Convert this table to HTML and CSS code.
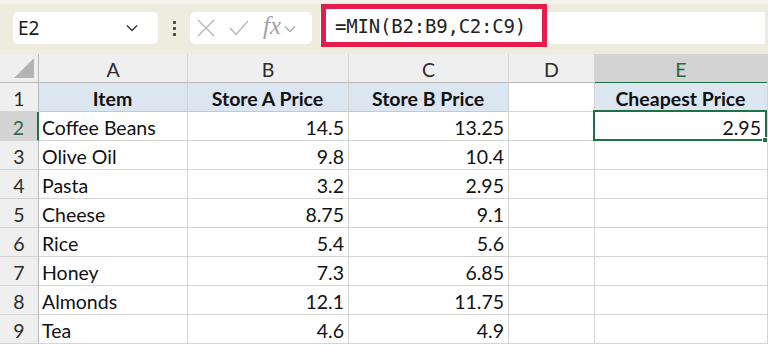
FILE: index.html
```html
<!DOCTYPE html>
<html>
<head>
<meta charset="utf-8">
<link rel="stylesheet" href="styles.css">
</head>
<body>
<div class="toolbar">
  <div class="namebox">
    <span class="name">E2</span>
    <svg class="chev" width="12" height="8" viewBox="0 0 12 8"><path d="M1 1.5 L6 6.5 L11 1.5" fill="none" stroke="#333" stroke-width="1.4"/></svg>
  </div>
  <div class="dots"><i></i><i></i><i></i></div>
  <div class="fxbox">
    <svg width="20" height="18" viewBox="0 0 20 18"><path d="M2 1 L18 17 M18 1 L2 17" stroke="#b5b5b5" stroke-width="1.3" fill="none"/></svg>
    <svg width="20" height="18" viewBox="0 0 20 18"><path d="M1 9 L7 15.5 L19 2" stroke="#b5b5b5" stroke-width="1.3" fill="none"/></svg>
    <span class="fx">fx</span>
    <svg class="chev2" width="12" height="8" viewBox="0 0 12 8"><path d="M1 1.5 L6 6.5 L11 1.5" fill="none" stroke="#aaa" stroke-width="1.3"/></svg>
  </div>
  <div class="formula">
    <span class="hl">=MIN(B2:B9,C2:C9)</span>
  </div>
</div>
<div class="sheet">
  <div class="ch corner"><span class="tri"></span></div>
  <div class="ch">A</div>
  <div class="ch">B</div>
  <div class="ch">C</div>
  <div class="ch">D</div>
  <div class="ch sel">E</div>

  <div class="rh">1</div>
  <div class="c hd">Item</div>
  <div class="c hd">Store A Price</div>
  <div class="c hd">Store B Price</div>
  <div class="c"></div>
  <div class="c hd">Cheapest Price</div>

  <div class="rh rsel">2</div>
  <div class="c">Coffee Beans</div>
  <div class="c n">14.5</div>
  <div class="c n">13.25</div>
  <div class="c"></div>
  <div class="c n active">2.95<span class="handle"></span></div>

  <div class="rh">3</div>
  <div class="c">Olive Oil</div>
  <div class="c n">9.8</div>
  <div class="c n">10.4</div>
  <div class="c"></div>
  <div class="c"></div>

  <div class="rh">4</div>
  <div class="c">Pasta</div>
  <div class="c n">3.2</div>
  <div class="c n">2.95</div>
  <div class="c"></div>
  <div class="c"></div>

  <div class="rh">5</div>
  <div class="c">Cheese</div>
  <div class="c n">8.75</div>
  <div class="c n">9.1</div>
  <div class="c"></div>
  <div class="c"></div>

  <div class="rh">6</div>
  <div class="c">Rice</div>
  <div class="c n">5.4</div>
  <div class="c n">5.6</div>
  <div class="c"></div>
  <div class="c"></div>

  <div class="rh">7</div>
  <div class="c">Honey</div>
  <div class="c n">7.3</div>
  <div class="c n">6.85</div>
  <div class="c"></div>
  <div class="c"></div>

  <div class="rh">8</div>
  <div class="c">Almonds</div>
  <div class="c n">12.1</div>
  <div class="c n">11.75</div>
  <div class="c"></div>
  <div class="c"></div>

  <div class="rh">9</div>
  <div class="c">Tea</div>
  <div class="c n">4.6</div>
  <div class="c n">4.9</div>
  <div class="c"></div>
  <div class="c"></div>
</div>
</body>
</html>
```
FILE: styles.css
```css
* { box-sizing: border-box; }
html, body { margin: 0; padding: 0; background: #ffffff; }
body { width: 768px; height: 346px; overflow: hidden; font-family: Lato, "Open Sans", sans-serif; }

.toolbar {
  height: 54px;
  background: #eeecdf;
  border-top: 4px solid #f3f2ea;
  display: flex;
  align-items: flex-start;
  padding: 8px 3px 0 13px;
}
.namebox {
  width: 145px;
  height: 32px;
  background: #fff;
  border-radius: 5px;
  display: flex;
  align-items: center;
  padding: 0 20px 0 5px;
  justify-content: space-between;
}
.name { font-family: "Noto Sans", "Open Sans", sans-serif; font-size: 19px; color: #1a1a1a; }
.dots {
  width: 32px;
  height: 32px;
  display: flex;
  flex-direction: column;
  align-items: center;
  justify-content: center;
  gap: 3px;
}
.dots i { display: block; width: 3px; height: 3px; background: #444; border-radius: 1px; }
.fxbox {
  width: 122px;
  height: 32px;
  background: #fff;
  border-radius: 5px;
  display: flex;
  align-items: center;
  padding-left: 6px;
}
.fxbox svg { margin-right: 13px; }
.fxbox .chev2 { margin: 2px 0 0 3px; }
.fx {
  font-family: "Liberation Serif", "DejaVu Serif", serif;
  font-style: italic;
  font-size: 25px;
  color: #a3a3a3;
  margin-left: 1px;
  margin-top: -4px;
}
.formula {
  flex: 1;
  height: 32px;
  margin-left: 8px;
  background: #fff;
  display: flex;
  align-items: flex-start;
}
.hl {
  display: flex;
  align-items: center;
  height: 43px;
  margin: -8px 0 0 1px;
  border: 5px solid #e41d4c;
  background: #fff;
  padding: 1px 0 0 9px;
  width: 226px;
  font-family: "DejaVu Sans Mono", "Liberation Mono", monospace;
  font-size: 19px;
  color: #222;
  letter-spacing: -0.2px;
}

.sheet {
  display: grid;
  grid-template-columns: 39px 149px 161px 160px 86px 173px;
  grid-auto-rows: 29px;
  font-size: 19.5px;
  color: #111;
}
.ch {
  background: #efefef;
  border-right: 1px solid #d4d4d4;
  border-bottom: 1px solid #b8b8b8;
  display: flex;
  align-items: center;
  justify-content: center;
  color: #2b2b2b;
  font-size: 19.5px;
  padding-top: 2px;
}
.ch.corner { border-right-color: #b8b8b8; position: relative; }
.tri {
  position: absolute;
  right: 4px;
  bottom: 4px;
  width: 0; height: 0;
  border-left: 20px solid transparent;
  border-bottom: 20px solid #b3b3b3;
}
.ch.sel {
  background: #d3d3d3;
  color: #1e6b40;
  border-bottom: 2px solid #1e7145;
  margin-bottom: -1px;
}
.rh {
  background: #efefef;
  border-right: 1px solid #b8b8b8;
  border-bottom: 1px solid #d4d4d4;
  display: flex;
  align-items: center;
  justify-content: center;
  color: #2b2b2b;
  padding-top: 2px;
}
.rh.rsel {
  background: #d3d3d3;
  color: #2f6b4a;
  border-right: 2px solid #1e7145;
}
.c {
  border-right: 1px solid #d4d4d4;
  border-bottom: 1px solid #d4d4d4;
  display: flex;
  align-items: center;
  padding: 2px 4px 0 3px;
  white-space: nowrap;
}
.c.hd {
  background: #dce6f1;
  font-weight: bold;
  justify-content: center;
  border-bottom-color: #c4c8cc;
}
.c.n { justify-content: flex-end; }
.c.active { position: relative; padding-right: 6px; }
.c.active::after {
  content: "";
  position: absolute;
  left: -2px; top: -2px; right: 0; bottom: -1px;
  border: 2px solid #1e7145;
}
.handle {
  position: absolute;
  right: -1px;
  bottom: -3px;
  width: 6px;
  height: 6px;
  background: #1e7145;
  border: 1px solid #fff;
  z-index: 2;
}
```
